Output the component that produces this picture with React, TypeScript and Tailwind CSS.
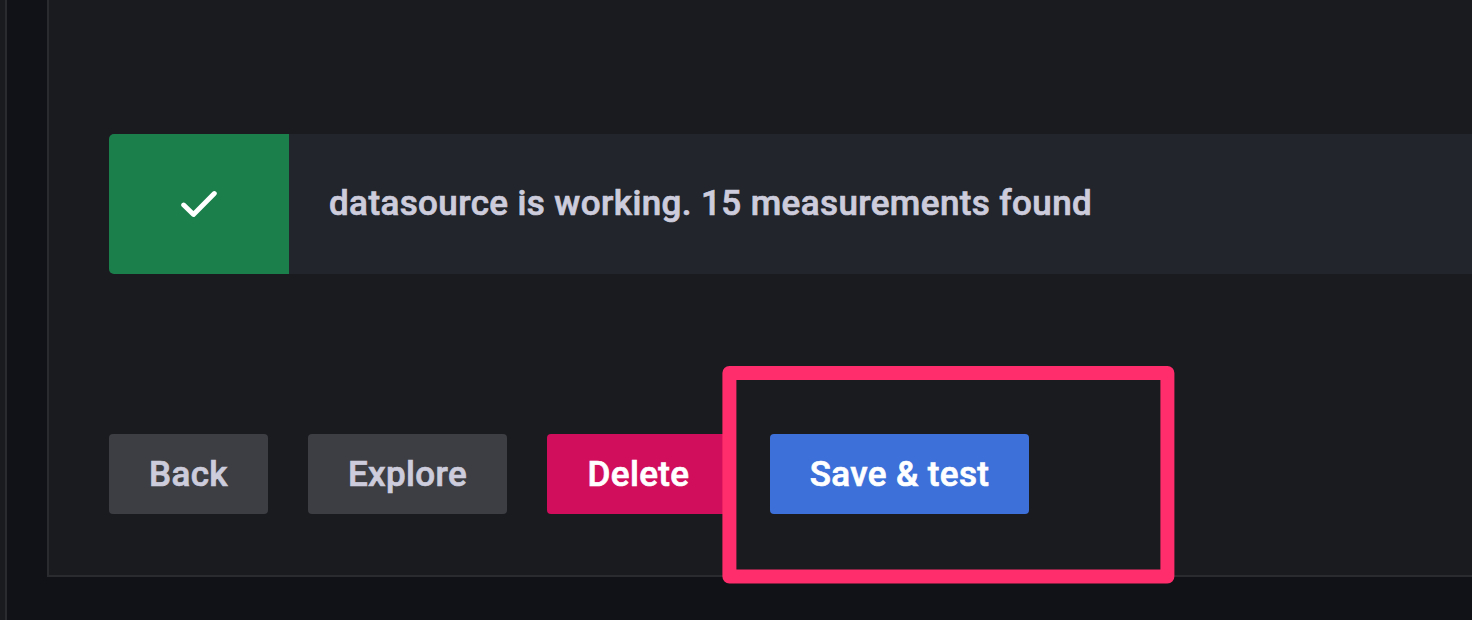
import React from "react";

const button =
  "flex h-20 items-center justify-center rounded-[4px] pt-0.5 text-[35px] font-medium tracking-[0.375px] [-webkit-text-stroke:0.7px_currentColor]";

export default function App() {
  return (
    <div className="relative flex h-[620px] w-[1472px] overflow-hidden bg-[#111217] font-['Roboto',sans-serif]">
      <div className="w-[7px] shrink-0 border-r-2 border-[#2a2b2f] bg-[#1a1b1f]" />
      <div className="flex-1 pl-10">
        <main className="h-[577px] border-b-2 border-l-2 border-[#2a2b2f] bg-[#1a1b1f] pl-[60px] pt-[134px]">
          <div className="flex h-[140px] overflow-hidden rounded-l-[5px] bg-[#22252b]">
            <div className="flex w-[180px] items-center justify-center bg-[#1a7f4b]">
              <svg width="36" height="26" viewBox="0 0 36 26" fill="none">
                <path d="M2.7 14 L12.5 23.4 L33.3 2.6" stroke="#fff" strokeWidth="4.9" strokeLinecap="round" strokeLinejoin="round" />
              </svg>
            </div>
            <p className="flex items-center pl-10 text-[35px] font-medium tracking-[0.395px] text-[#ccccdc] [-webkit-text-stroke:0.7px_currentColor]">
              datasource is working. 15 measurements found
            </p>
          </div>
          <div className="mt-40 flex gap-10">
            <button className={`${button} w-[159px] bg-[#3d3e43] text-[#ccccdc]`}>Back</button>
            <button className={`${button} w-[199px] bg-[#3d3e43] text-[#ccccdc]`}>Explore</button>
            <button className={`${button} w-[183px] bg-[#d10e5c] text-white`}>Delete</button>
            <button className={`${button} w-[259px] bg-[#3d71d9] text-white`}>Save &amp; test</button>
          </div>
        </main>
      </div>
      <svg className="pointer-events-none absolute left-[720px] top-[364px]" width="456" height="222" fill="none">
        <rect x="9.4" y="9" width="438" height="203.5" stroke="#ff2d6b" strokeWidth="14" strokeLinejoin="round" />
      </svg>
    </div>
  );
}
